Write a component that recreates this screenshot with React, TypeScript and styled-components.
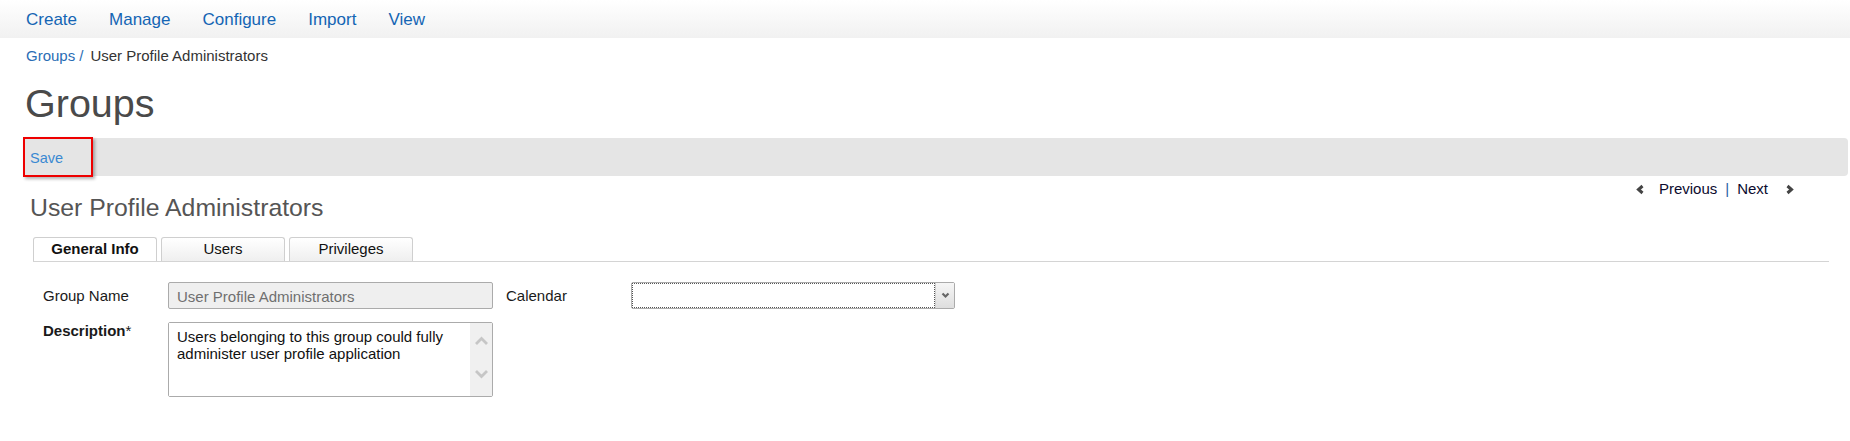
import React from 'react'
import styled, { createGlobalStyle } from 'styled-components'

const GlobalStyle = createGlobalStyle`
  body {
    margin: 0;
    background: #fff;
    font-family: "Liberation Sans", Arial, sans-serif;
    color: #222;
  }
`;

const menu = ['Create', 'Manage', 'Configure', 'Import', 'View'];
const tabs = ['General Info', 'Users', 'Privileges'];

const App = () => {
  return (
    <>
      <GlobalStyle />
      <NavBar>
        {menu.map((item) => (
          <NavItem key={item}>{item}</NavItem>
        ))}
      </NavBar>

      <Breadcrumb>
        <CrumbLink>Groups</CrumbLink>
        <CrumbSep>/</CrumbSep>
        <span>User Profile Administrators</span>
      </Breadcrumb>

      <PageTitle>Groups</PageTitle>

      {/* action toolbar */}
      <ActionBar>
        <SaveButton>Save</SaveButton>
      </ActionBar>

      <HeaderRow>
        <RecordTitle>User Profile Administrators</RecordTitle>
        <Pager>
          <Chevron width="9" height="11" viewBox="0 0 9 11">
            <polyline points="6.5,2 2.5,5.5 6.5,9" />
          </Chevron>
          <PagerLink>Previous</PagerLink>
          <PagerSep>|</PagerSep>
          <PagerLink>Next</PagerLink>
          <Chevron width="9" height="11" viewBox="0 0 9 11" $right>
            <polyline points="2.5,2 6.5,5.5 2.5,9" />
          </Chevron>
        </Pager>
      </HeaderRow>

      <TabStrip>
        {tabs.map((t, idx) => (
          <Tab key={t} $active={idx === 0}>{t}</Tab>
        ))}
      </TabStrip>

      {/* General Info form */}
      <FormGrid>
        <FieldLabel $center>Group Name</FieldLabel>
        <TextInput value="User Profile Administrators" readOnly />
        <FieldLabel $center>Calendar</FieldLabel>
        <SelectBox>
          <SelectValue />
          <SelectArrow>
            <svg width="9" height="7" viewBox="0 0 9 7">
              <polyline points="1.5,1.5 4.5,4.5 7.5,1.5" fill="none" stroke="#666" strokeWidth="2.2" />
            </svg>
          </SelectArrow>
        </SelectBox>

        <FieldLabel $bold>
          Description<Required>*</Required>
        </FieldLabel>
        <TextAreaBox>
          <TextArea
            readOnly
            value="Users belonging to this group could fully administer user profile application"
          />
          <ScrollTrack>
            <svg width="15" height="10" viewBox="0 0 15 10">
              <polyline points="2,8 7.5,2.5 13,8" fill="none" stroke="#c6c6c6" strokeWidth="2.8" />
            </svg>
            <svg width="15" height="10" viewBox="0 0 15 10">
              <polyline points="2,2 7.5,7.5 13,2" fill="none" stroke="#c6c6c6" strokeWidth="2.8" />
            </svg>
          </ScrollTrack>
        </TextAreaBox>
      </FormGrid>
    </>
  )
}

export default App

const NavBar = styled.nav`
  display: flex;
  align-items: center;
  gap: 32px;
  height: 38px;
  padding-left: 26px;
  padding-top: 1px;
  box-sizing: border-box;
  background: linear-gradient(#ffffff, #f1f1f1);
`;

const NavItem = styled.a`
  font-size: 17px;
  color: #1465b4;
  cursor: pointer;
`;

const Breadcrumb = styled.div`
  display: flex;
  margin: 9px 0 0 26px;
  font-size: 15px;
  line-height: 18px;
  color: #333;
`;

const CrumbLink = styled.a`
  color: #2a6db5;
`;

const CrumbSep = styled.span`
  color: #2a6db5;
  margin: 0 7px 0 4px;
`;

const PageTitle = styled.h1`
  margin: 19px 0 0 25px;
  font-size: 39.5px;
  line-height: 39px;
  font-weight: normal;
  color: #4a4a4a;
`;

const ActionBar = styled.div`
  display: flex;
  align-items: center;
  height: 38px;
  margin: 15px 2px 0 24px;
  background: #e5e5e5;
  border-radius: 0 4px 4px 0;
`;

const SaveButton = styled.a`
  display: flex;
  align-items: center;
  box-sizing: border-box;
  flex: none;
  width: 70px;
  height: 40px;
  margin-left: -1px;
  padding: 1px 0 0 5px;
  border: 2px solid #ee0000;
  box-shadow: 2px 2px 3px rgba(0, 0, 0, 0.3);
  font-size: 14.5px;
  color: #3a89d2;
  cursor: pointer;
`;

const HeaderRow = styled.div`
  display: flex;
  justify-content: space-between;
  align-items: flex-start;
`;

const RecordTitle = styled.h2`
  margin: 17px 0 0 30px;
  font-size: 24.8px;
  line-height: 30px;
  font-weight: normal;
  color: #555;
`;

const Pager = styled.div`
  display: flex;
  align-items: center;
  margin: 4px 56px 0 0;
  font-size: 15px;
  line-height: 18px;
`;

const Chevron = styled.svg<{ $right?: boolean }>`
  fill: none;
  stroke: #444;
  stroke-width: 3;
  margin: ${p => (p.$right ? '1px 0 0 17px' : '1px 14px 0 0')};
`;

const PagerLink = styled.a`
  color: #0b0b2e;
  cursor: pointer;
`;

const PagerSep = styled.span`
  color: #1f5fa6;
  margin: 0 8px 0 8px;
`;

const TabStrip = styled.div`
  display: flex;
  gap: 4px;
  margin: 14px 21px 0 33px;
  border-bottom: 1px solid #d4d4d4;
`;

const Tab = styled.div<{ $active?: boolean }>`
  box-sizing: border-box;
  width: 124px;
  height: 24px;
  border: 1px solid #cfcfcf;
  border-bottom: none;
  border-radius: 3px 3px 0 0;
  background: ${p => (p.$active ? '#fff' : 'linear-gradient(#ffffff, #efefef)')};
  text-align: center;
  font-size: 15px;
  line-height: 21px;
  font-weight: ${p => (p.$active ? 'bold' : 'normal')};
  color: #111;
`;

const FormGrid = styled.div`
  display: grid;
  grid-template-columns: 125px 338px 125px 324px;
  grid-template-rows: 27px 75px;
  row-gap: 13px;
  margin: 20px 0 0 43px;
  width: max-content;
`;

const FieldLabel = styled.div<{ $center?: boolean; $bold?: boolean }>`
  align-self: ${p => (p.$center ? 'center' : 'start')};
  padding-top: ${p => (p.$center ? '1px' : '0')};
  font-size: 15px;
  line-height: 18px;
  font-weight: ${p => (p.$bold ? 'bold' : 'normal')};
  color: #1a1a1a;
`;

const Required = styled.span`
  font-weight: normal;
`;

const TextInput = styled.input`
  box-sizing: border-box;
  width: 325px;
  height: 27px;
  margin: 0;
  padding: 1px 8px 0;
  border: 1px solid #ababab;
  border-radius: 2px;
  background: #efefef;
  font-family: inherit;
  font-size: 15px;
  color: #6f6f6f;
  outline: none;
`;

const SelectBox = styled.div`
  box-sizing: border-box;
  display: flex;
  width: 324px;
  height: 27px;
  border: 1px solid #ababab;
  border-radius: 2px;
  background: #fff;
`;

const SelectValue = styled.div`
  flex: 1;
  border: 1px dotted #555;
`;

const SelectArrow = styled.div`
  display: flex;
  align-items: center;
  justify-content: center;
  width: 18px;
  border-left: 1px solid #cfcfcf;
  background: linear-gradient(#f6f6f6, #dedede);
`;

const TextAreaBox = styled.div`
  box-sizing: border-box;
  display: flex;
  width: 325px;
  height: 75px;
  border: 1px solid #ababab;
  border-radius: 2px;
  background: #fff;
`;

const TextArea = styled.textarea`
  flex: 1;
  margin: 0;
  padding: 5px 8px;
  border: none;
  resize: none;
  overflow: hidden;
  font-family: inherit;
  font-size: 15px;
  line-height: 17px;
  color: #111;
  outline: none;
`;

const ScrollTrack = styled.div`
  display: flex;
  flex-direction: column;
  align-items: center;
  justify-content: space-between;
  width: 22px;
  padding: 13px 0 17px;
  box-sizing: border-box;
  background: #f0f0f0;
`;
